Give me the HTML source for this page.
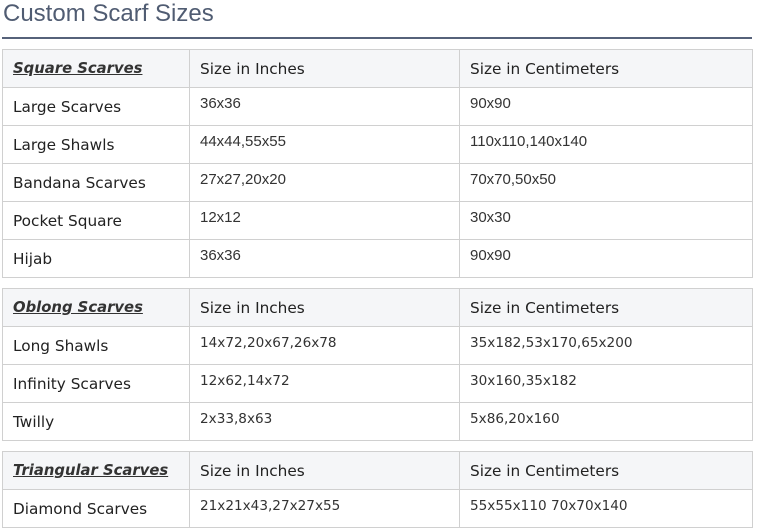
<!DOCTYPE html>
<html><head><meta charset="utf-8"><style>
body{margin:0;background:#fff;width:757px;height:531px;overflow:hidden;font-family:"DejaVu Sans",sans-serif;}
h2{position:absolute;left:3px;top:0;margin:0;font:400 24px "Liberation Sans",sans-serif;color:#505c72;line-height:28px;}
.rule{position:absolute;left:2px;top:37px;width:750px;height:2px;background:#56627a;}
table{position:absolute;left:2px;width:751px;border-collapse:collapse;table-layout:fixed;}
td{border:1px solid #d0d0d0;height:38px;padding:0 0 0 10px;font-size:15.3px;color:#222;box-sizing:border-box;}
tr.h td{background:#f5f6f8;}
tr.h td:first-child{font-style:italic;font-weight:bold;text-decoration:underline;color:#333;font-size:14.8px;}
td.n{font:15px "Liberation Sans",sans-serif;color:#333;padding-bottom:6px;}
td.v{font-size:13.6px;color:#333;padding-bottom:6px;}
</style></head><body>
<h2>Custom Scarf Sizes</h2>
<div class="rule"></div>
<table style="top:49px"><colgroup><col style="width:187px"><col style="width:270px"><col></colgroup>
<tr class="h"><td>Square Scarves</td><td>Size in Inches</td><td>Size in Centimeters</td></tr>
<tr><td>Large Scarves</td><td class="n">36x36</td><td class="n">90x90</td></tr>
<tr><td>Large Shawls</td><td class="n">44x44,55x55</td><td class="n">110x110,140x140</td></tr>
<tr><td>Bandana Scarves</td><td class="n">27x27,20x20</td><td class="n">70x70,50x50</td></tr>
<tr><td>Pocket Square</td><td class="n">12x12</td><td class="n">30x30</td></tr>
<tr><td>Hijab</td><td class="n">36x36</td><td class="n">90x90</td></tr>
</table>
<table style="top:288px"><colgroup><col style="width:187px"><col style="width:270px"><col></colgroup>
<tr class="h"><td>Oblong Scarves</td><td>Size in Inches</td><td>Size in Centimeters</td></tr>
<tr><td>Long Shawls</td><td class="v">14x72,20x67,26x78</td><td class="v">35x182,53x170,65x200</td></tr>
<tr><td>Infinity Scarves</td><td class="v">12x62,14x72</td><td class="v">30x160,35x182</td></tr>
<tr><td>Twilly</td><td class="v">2x33,8x63</td><td class="v">5x86,20x160</td></tr>
</table>
<table style="top:451px"><colgroup><col style="width:187px"><col style="width:270px"><col></colgroup>
<tr class="h"><td>Triangular Scarves</td><td>Size in Inches</td><td>Size in Centimeters</td></tr>
<tr><td>Diamond Scarves</td><td class="v">21x21x43,27x27x55</td><td class="v">55x55x110 70x70x140</td></tr>
</table>
</body></html>
